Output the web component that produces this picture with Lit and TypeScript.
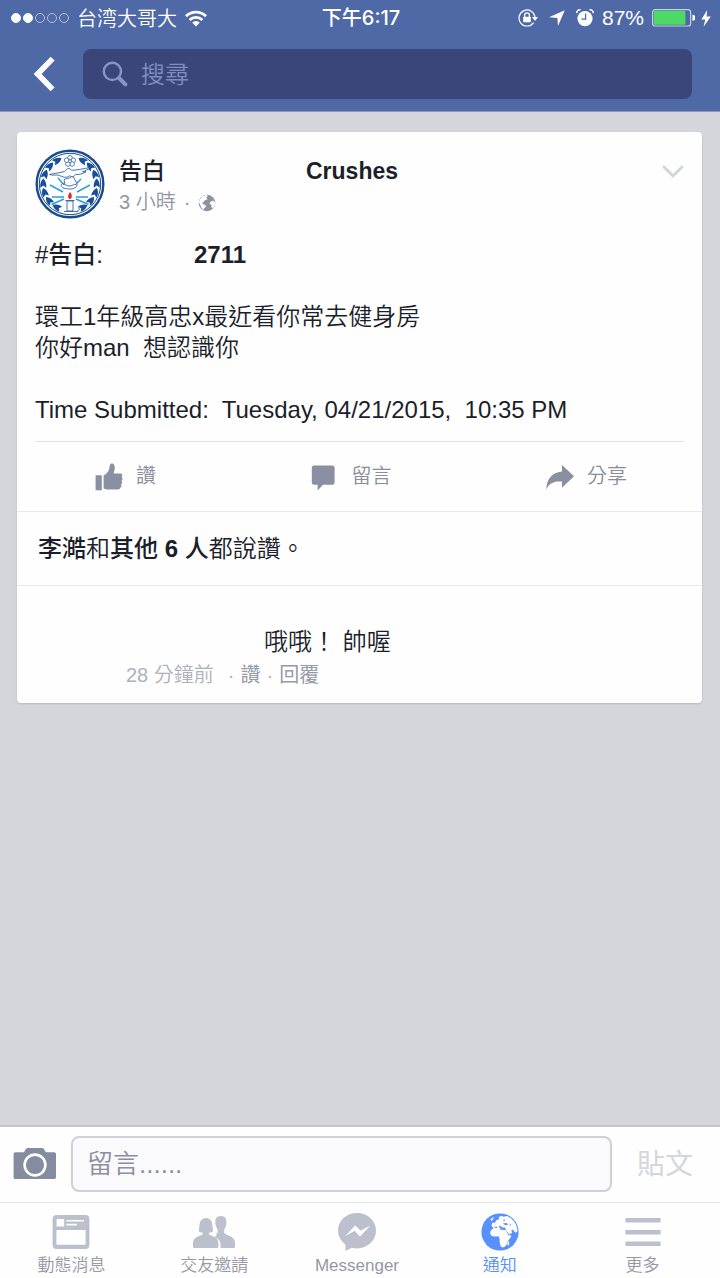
import { LitElement, html, css, svg } from 'lit';
import { customElement, property } from 'lit/decorators.js';

const wifiIcon = html`<svg width="22" height="17" viewBox="0 0 22 17" aria-hidden="true">
  <g fill="none" stroke="#fff" stroke-width="2.8">
    <path d="M1 6.2a14.2 14.2 0 0 1 20 0" />
    <path d="M4.600 10a9.100 9.100 0 0 1 12.800 0" />
  </g>
  <path d="M11 16.400 7.200 12.600a5.400 5.400 0 0 1 7.600 0z" fill="#fff" />
</svg>`;

const lockIcon = html`<svg width="20" height="18" viewBox="0 0 20 18" aria-hidden="true">
  <path d="M15.600 13.600A8 8 0 1 1 17 8.200" fill="none" stroke="#fff" stroke-width="1.200" />
  <path d="M14 8h6l-3 4z" fill="#fff" />
  <path d="M6.600 8V6.300a2.400 2.400 0 0 1 4.800 0V8" fill="none" stroke="#fff" stroke-width="1.300" />
  <rect x="5.200" y="7.800" width="7.600" height="5.400" rx=".6" fill="#fff" />
</svg>`;

const locationIcon = html`<svg width="16" height="16" viewBox="0 0 16 16" aria-hidden="true">
  <path d="M15.800.2 9 16 8.400 8 0 7.200z" fill="#fff" />
</svg>`;

const alarmIcon = html`<svg width="18" height="18" viewBox="0 0 18 18" aria-hidden="true">
  <circle cx="9" cy="9.600" r="7.600" fill="#fff" />
  <path d="M.8 4.200A3 3 0 0 1 4.600.9M17.200 4.200A3 3 0 0 0 13.400.9" fill="none" stroke="#fff" stroke-width="1.500" />
  <path d="M9.600 4.600v5.600H5.400" fill="none" stroke="#4e69a6" stroke-width="1.300" />
</svg>`;

const batteryIcon = html`<svg width="43" height="18" viewBox="0 0 43 18" aria-hidden="true">
  <rect x=".6" y=".6" width="38" height="16.400" rx="2.600" fill="none" stroke="#c6cfe3" stroke-width="1.200" />
  <rect x="1.800" y="1.800" width="31.600" height="14" rx="1" fill="#4cd964" />
  <path d="M40.400 5.800a3 3 0 0 1 0 6z" fill="#fff" />
</svg>`;

const boltIcon = html`<svg width="10" height="17" viewBox="0 0 10 17" aria-hidden="true">
  <path d="M6.200 0 .4 9.400h3.800L2.600 16.800 9.800 6.600H5.600z" fill="#fff" />
</svg>`;

const backIcon = html`<svg width="22" height="36" viewBox="0 0 22 36" aria-hidden="true">
  <path d="M19.600 2.600 4.600 18l15 15.400" fill="none" stroke="#fff" stroke-width="5.600" />
</svg>`;

const searchIcon = html`<svg width="26" height="26" viewBox="0 0 26 26" aria-hidden="true">
  <circle cx="10.400" cy="10.400" r="8.600" fill="none" stroke="#8795c6" stroke-width="2.400" />
  <path d="m17 17 6.400 6.400" stroke="#8795c6" stroke-width="4" stroke-linecap="round" />
</svg>`;

const leafPath = 'M8.300 29.500c2.600 2.500 3.300 5.500 2.900 9.200l-2.900-2.200-2.900 2.200c-.6-3.700.3-6.700 2.900-9.200z';
const leaves = [60, 40, 20, 0, -20, -40, -62].map((angle) => svg`
  <path d=${leafPath} transform="rotate(${angle} 35 35)" />
  <path d=${leafPath} transform="translate(70 0) scale(-1 1) rotate(${angle} 35 35)" />`);

const crest = html`<svg width="70" height="70" viewBox="0 0 70 70" role="img" aria-label="告白">
  <circle cx="35" cy="35" r="33.300" fill="#fff" stroke="#1b4b8f" stroke-width="2.400" />
  <circle cx="35" cy="35" r="30.700" fill="none" stroke="#1b4b8f" stroke-width="1" />
  <g fill="#174f9c">${leaves}</g>
  <path d="m15 36 13 7M17 48h12M16.500 55.500 29 50M23 29l6 7M55 36l-13 7M53 48H41M53.500 55.500 41 50M46 30l-5 5" stroke="#2ba0d8" stroke-width="1.500" />
  <g fill="#fff" stroke="#4470ae" stroke-width=".9">
    <circle cx="35" cy="8.800" r="2.300" /><circle cx="38.300" cy="11.200" r="2.300" /><circle cx="37.100" cy="15" r="2.300" />
    <circle cx="32.900" cy="15" r="2.300" /><circle cx="31.700" cy="11.200" r="2.300" /><circle cx="35" cy="12.200" r="1.500" />
  </g>
  <g fill="#fff" stroke="#174f9c" stroke-width=".8">
    <path d="M14.500 25.500c6-1.500 10-1.500 15-3 3-3.500 5-4 7-1.200 6-.2 12-1.700 18.500-2.700-2.500 2.500-5 3.300-7.500 4 1 .5 2 .2 3.500.2-3.500 2.300-7 2.800-10.500 2.800-1.500 2.500-4 2.200-6 1.200-3 2.700-7 1.200-11-.7-3-.3-6 .5-9-.6z" />
    <path d="M29 31c1-2 5-1 7-3 1-1 3 0 3.500 2l2.500 5c.5 3-3 5-7 5s-9-1-9-3.500c0-1.500 2-2.500 4-2.200z" />
    <path d="M28 35.500c3-.5 4 2 7 1.500s4-2 6-1.500" fill="none" />
    <path d="M32 52h6v10h-6zM30.500 51.500h9M29 62.500h14M42 62c3 0 3-3 1-3.500" />
  </g>
  <path d="M35 43c2.500 2.500 2.300 6.500 0 7-2.700-.5-2.300-4 0-7z" fill="#e02b20" />
</svg>`;

const smallGlobe = html`<svg width="18" height="18" viewBox="0 0 18 18" aria-hidden="true">
  <circle cx="9" cy="9" r="8.300" fill="#8d92a2" />
  <path d="M6 1.400 9 .800l.6 1.600-1.400 1.200 1.400 1.600-3 1.400-1.400 2-1.200.2 1.600 1.600 2 .6.2 2-1.600 1.200-.4 1.600C3.600 14.400 2.400 12.400 2 10L.9 8.600c.3-3 2.300-6 5.100-7.200zM12 8l3-1.600 2.200 2c0 2.400-1 4.600-2.600 6l-1-1-.4-2.600-1.600-1z" fill="#fff" />
</svg>`;

const chevronIcon = html`<svg width="22" height="14" viewBox="0 0 22 14" aria-hidden="true">
  <path d="m2 2 9 9 9-9" fill="none" stroke="#d3d5dc" stroke-width="3" stroke-linecap="round" />
</svg>`;

const likeIcon = html`<svg width="28" height="28" viewBox="0 0 28 28" aria-hidden="true">
  <path d="M.6 12.200h6.200v15H.6zM8.600 25.600V12.400c3.400-1.400 5.600-4.600 6-8.400.1-1.800.6-3.400 2.200-3.400 2.600 0 3.200 2.800 3 5-.2 1.600-.8 3.400-1.200 4.800h7c1.800 0 2.400 2.800.8 3.600 1.600.8 1.400 3.200 0 3.800 1.200.8 1 3-.4 3.600.8 1 .6 3-.8 3.400-.2 1-1 1.600-2.200 1.600H12c-1.400 0-2.400-.4-3.400-.8z" fill="#8a8fa1" />
</svg>`;

const commentIcon = html`<svg width="28" height="28" viewBox="0 0 28 28" aria-hidden="true">
  <path d="M3 2.400h18.400a2.200 2.200 0 0 1 2.200 2.200v15a2.200 2.200 0 0 1-2.200 2.200H12L6.600 27.400v-5.600H3A2.200 2.200 0 0 1 .8 19.600v-15A2.200 2.200 0 0 1 3 2.400z" fill="#8a8fa1" />
</svg>`;

const shareIcon = html`<svg width="28" height="28" viewBox="0 0 28 28" aria-hidden="true">
  <path d="M16 2 28 13.200 16 24.800v-6.200C8.400 18.200 3.400 19.600.4 26.400.4 16.400 5.600 9.400 16 8.400z" fill="#8a8fa1" />
</svg>`;

const cameraIcon = html`<svg width="44" height="34" viewBox="0 0 44 34" aria-hidden="true">
  <path d="M2.400 5.200H11l2-3.400C13.400 1.200 14 1 14.600 1h14.600c.6 0 1.200.2 1.600.8l2 3.400h8.400c1 0 1.800.8 1.800 1.800v23.200c0 1-.8 1.800-1.800 1.800H2.400c-1 0-1.800-.8-1.800-1.800V7c0-1 .8-1.800 1.800-1.800z" fill="#868ca0" />
  <circle cx="22" cy="18" r="10.400" fill="none" stroke="#fff" stroke-width="2.600" />
</svg>`;

const feedIcon = html`<svg width="38" height="38" viewBox="0 0 38 38" aria-hidden="true">
  <rect x=".6" y="2" width="36.800" height="34" rx="4" fill="#bbc0cc" />
  <path d="M4.600 6h7.600v7.600H4.600zM14.400 7H32v1.400H14.400zM14.400 10.800H25v1.600H14.400z" fill="#fff" />
  <rect x="4.400" y="17" width="29.200" height="14.800" rx="1" fill="#fff" />
</svg>`;

const friendsIcon = html`<svg width="42" height="38" viewBox="0 0 42 38" aria-hidden="true">
  <g fill="#bbc0cc">
    <path d="M28 3c4 0 5.600 2.800 5.400 6.400-.2 3.200-.8 5-2.200 6.800v4c4.400 3 10.600 3.600 10.800 9.200v4c0 1-.6 1.600-1.600 1.600H27.600c.4-6-.6-8.400-6.200-11.200 2-.2 3.200-2 1.200-3l2-.6v-4c-1.600-2-2.400-4.600-2.200-7.200C22.200 5 24.200 3 28 3z" />
    <path d="M13 5c4.800 0 6.200 3.800 6.400 8 .2 2 .8 3.600.4 5.400-.8.800-2.200 1-3.600 1v2.200c4.600 2.200 9.200 2.800 9.200 9.200v2.600c0 1-.6 1.600-1.600 1.600H1.600C.6 35 0 34.400 0 33.400v-2.600c0-6.400 4.800-7 9.600-9.200v-2.200c-1.400 0-2.800-.2-3.600-1-.4-1.800.2-3.400.4-5.400C6.600 8.800 8.200 5 13 5z" />
  </g>
</svg>`;

const messengerIcon = html`<svg width="38" height="38" viewBox="0 0 38 38" aria-hidden="true">
  <path d="M19 0c10.600 0 19 7.600 19 17.600S29.600 35.400 19 35.400c-1.800 0-3.600-.2-5.200-.6L7.400 38v-6.600C2.800 28.200 0 23.200 0 17.600 0 7.600 8.400 0 19 0z" fill="#bbc0cc" />
  <path d="m6.800 23.400 10.400-11 5.400 5.400 9.800-5.400L22 23.400l-5.400-5.600z" fill="#fff" />
</svg>`;

const globeIcon = html`<svg width="38" height="38" viewBox="0 0 38 38" aria-hidden="true">
  <circle cx="19" cy="19" r="18.600" fill="#5890ff" />
  <g fill="#fff">
    <path d="M12.400 15.200c2.400-.4 4.400-.8 5.800-.2l1 1.400 5.600.8 2.600 5 3 .2c-.6 2.600-3 4.200-3.800 6-.6 1.400-.2 2.600-1.800 3.800-1 2-2.400 2.400-4.200 2-1.600-1.600-1.600-4-2-6 .4-2.200-.4-3.600-1.200-5-2.600.2-5.200.8-7.200-.8-1.800-2.200-1.400-4.800 2.200-7.200z" />
    <path d="M10.600 12.800l.4-2.800 3.200-.6 1.200-2.200 3-1.200-.8-1.800 2.800-1.400 2.200 1 3.400-.8c5 1.800 8.800 6.200 10.200 12.400l.2 3.400-2.200 1-2.200-3-1.600.2.800 2.800-3 1.800-3.400-4.600-.6-2.400-3-.2-2.200-2-1.200.8 1.600 2.800-1.400.2-2.400-2.800-1.800.8-1 1.200z" />
    <path d="M9.600 6l3-2-.4 2-1.800 2.200zM26.400 31.800c0-2 .6-3.200 1.600-4 .4 2 0 4-.8 5.200z" />
  </g>
  <path d="M21.800 10.400l3.800-.4 1.600 1.400-2.800.8zM23 6l1.200 1.800-2 .4zM28.800 10.200l1.400 2.400-1.400.2z" fill="#5890ff" />
</svg>`;

const menuIcon = html`<svg width="38" height="38" viewBox="0 0 38 38" aria-hidden="true">
  <path d="M1.400 5h35.200v4.600H1.400zM1.400 17h35.200v4.400H1.400zM1.400 28.400h35.200V33H1.400z" fill="#bbc0cc" />
</svg>`;

@customElement('status-bar')
class StatusBar extends LitElement {
  static styles = css`
    :host {
      display: grid;
      grid-template-columns: 1fr auto 1fr;
      align-items: center;
      height: 36px;
      padding: 0 9px 0 11px;
      font-size: 20px;
      font-weight: 400;
      line-height: 28px;
      color: #fff;
    }
    .side { display: flex; align-items: center; gap: 8px; }
    .end { justify-content: flex-end; font-size: 21px; }
    .signal { display: flex; gap: 2px; }
    .dot { width: 10px; height: 10px; box-sizing: border-box; border: 1px solid #b4c0dc; border-radius: 50%; }
    .on { background: #fff; border-color: #fff; }
    .time { font-weight: 500; font-family: Inter, 'Noto Sans CJK TC', sans-serif; }
    .carrier { font-family: 'Noto Sans CJK SC', sans-serif; font-weight: 350; }
    .icons { display: flex; align-items: center; gap: 11px; }
    .power { display: flex; align-items: center; gap: 6px; }
    svg { display: block; }
  `;
  render() {
    return html`
      <div class="side">
        <div class="signal">
          ${[1, 1, 0, 0, 0].map((on) => html`<span class="dot ${on ? 'on' : ''}"></span>`)}
        </div>
        <span class="carrier">台湾大哥大</span>${wifiIcon}
      </div>
      <span class="time">下午6:17</span>
      <div class="side end">
        <div class="icons">${lockIcon}${locationIcon}${alarmIcon}</div>
        <span>87%</span>
        <div class="power">${batteryIcon}${boltIcon}</div>
      </div>
    `;
  }
}

@customElement('tab-item')
class TabItem extends LitElement {
  @property() label = '';
  @property({ attribute: false }) icon: unknown;
  @property({ type: Boolean }) active = false;
  static styles = css`
    :host { display: block; flex: 1; min-width: 0; }
    .tab {
      display: flex;
      flex-direction: column;
      align-items: center;
      gap: 3px;
      font-size: 17px;
      line-height: 24px;
      color: #9599a3;
      text-decoration: none;
      white-space: nowrap;
    }
    .active { color: #5890ff; }
    svg { display: block; }
  `;
  render() {
    return html`<a class="tab ${this.active ? 'active' : ''}" href="#">${this.icon}<span>${this.label}</span></a>`;
  }
}

@customElement('app-root')
class AppRoot extends LitElement {
  static styles = css`
    :host {
      display: flex;
      flex-direction: column;
      box-sizing: border-box;
      min-height: 100vh;
      background: #d4d6dc;
      color: #1c1e2b;
      font-family: 'Liberation Sans', 'Noto Sans CJK TC', sans-serif;
      font-size: 24px;
      font-weight: 350;
      line-height: 31px;
    }
    svg { display: block; }
    button, input { font: inherit; color: inherit; }
    button { padding: 0; border: 0; background: none; }
    .top { background: #4e69a6; border-bottom: 1px solid #8d98b8; }
    .bar { display: flex; align-items: center; gap: 28px; padding: 13px 28px 12px 33px; }
    .search {
      display: flex;
      flex: 1;
      align-items: center;
      gap: 13px;
      height: 50px;
      box-sizing: border-box;
      padding: 0 19px;
      border-radius: 8px;
      background: #3a4679;
    }
    .search input { flex: 1; min-width: 0; padding: 0; border: 0; outline: 0; background: none; color: #fff; }
    .search input::placeholder { color: #7f8cbd; opacity: 1; }
    main { flex: 1; padding: 20px 18px 20px 17px; }
    .card { border-radius: 4px; background: #fefefe; box-shadow: 0 1px 2px #b4b6be; }
    .post { padding: 17px 18px 0; }
    .head { display: flex; gap: 14px; }
    .who { flex: 1; padding-top: 7px; }
    .name { display: flex; gap: 141px; margin: 0; font-size: 23px; font-weight: 500; }
    .latin { font-weight: 700; }
    .when { display: flex; align-items: center; gap: 8px; font-size: 20px; color: #9196a4; }
    .more { align-self: flex-start; padding-top: 16px; }
    .text { margin: 0; padding: 20px 0 16px; white-space: pre-wrap; }
    .tag { display: flex; gap: 91px; font-weight: 500; }
    .actions {
      display: flex;
      justify-content: space-between;
      padding: 19px 57px 19px 60px;
      border-top: 1px solid #e3e4e8;
    }
    .action { display: flex; align-items: center; gap: 13px; font-size: 20px; color: #898d9b; }
    .likes { margin: 0; padding: 21px; border: 1px solid #e9eaed; border-width: 1px 0; }
    .likes b { font-weight: 500; }
    .likes .latin { font-weight: 700; }
    .comment { padding: 40px 20px 12px 109px; }
    .said { margin: 0 0 0 138px; }
    .meta { display: flex; gap: 6px; margin-top: 3px; font-size: 20px; color: #adb1bc; }
    .meta time { margin-right: 8px; }
    .meta button { color: #969aa8; font-weight: 400; }
    .bottom { background: #fefefe; border-top: 2px solid #c3c5cd; }
    .composer { display: flex; align-items: center; gap: 14px; padding: 9px 27px 10px 13px; }
    .composer input {
      flex: 1;
      min-width: 0;
      height: 56px;
      box-sizing: border-box;
      padding: 0 14px;
      border: 2px solid #cfd0d8;
      border-radius: 8px;
      background: #faf9fc;
      font-size: 26px;
    }
    .composer input::placeholder { color: #8b8fa0; opacity: 1; }
    .send { margin-left: 11px; font-size: 28px; font-weight: 400; color: #d5d6dc; }
    .tabs { display: flex; padding: 10px 6px 0 0; border-top: 1px solid #e4e5e9; }
  `;
  render() {
    return html`
      <header class="top">
        <status-bar></status-bar>
        <div class="bar">
          <button aria-label="返回">${backIcon}</button>
          <label class="search">${searchIcon}<input type="search" placeholder="搜尋" aria-label="搜尋" /></label>
        </div>
      </header>
      <main>
        <article class="card">
          <div class="post">
            <div class="head">
              ${crest}
              <div class="who">
                <h1 class="name"><span>告白</span><span class="latin">Crushes</span></h1>
                <div class="when"><span>3 小時</span><span>·</span>${smallGlobe}</div>
              </div>
              <button class="more" aria-label="更多選項">${chevronIcon}</button>
            </div>
            <div class="text"><div class="tag"><span>#告白:</span><span class="latin">2711</span></div>
環工1年級高忠x最近看你常去健身房
你好man  想認識你

Time Submitted:  Tuesday, 04/21/2015,  10:35 PM</div>
            <div class="actions">
              <button class="action">${likeIcon}讚</button>
              <button class="action">${commentIcon}留言</button>
              <button class="action">${shareIcon}分享</button>
            </div>
          </div>
          <p class="likes"><b>李澔</b>和<b>其他 <span class="latin">6</span> 人</b>都說讚。</p>
          <div class="comment">
            <p class="said">哦哦！ 帥喔</p>
            <div class="meta">
              <time>28 分鐘前</time><span>·</span><button>讚</button><span>·</span><button>回覆</button>
            </div>
          </div>
        </article>
      </main>
      <footer class="bottom">
        <form class="composer">
          <button type="button" aria-label="相機">${cameraIcon}</button>
          <input type="text" placeholder="留言......" aria-label="留言" />
          <button type="button" class="send">貼文</button>
        </form>
        <nav class="tabs">
          <tab-item label="動態消息" .icon=${feedIcon}></tab-item>
          <tab-item label="交友邀請" .icon=${friendsIcon}></tab-item>
          <tab-item label="Messenger" .icon=${messengerIcon}></tab-item>
          <tab-item label="通知" .icon=${globeIcon} active></tab-item>
          <tab-item label="更多" .icon=${menuIcon}></tab-item>
        </nav>
      </footer>
    `;
  }
}
